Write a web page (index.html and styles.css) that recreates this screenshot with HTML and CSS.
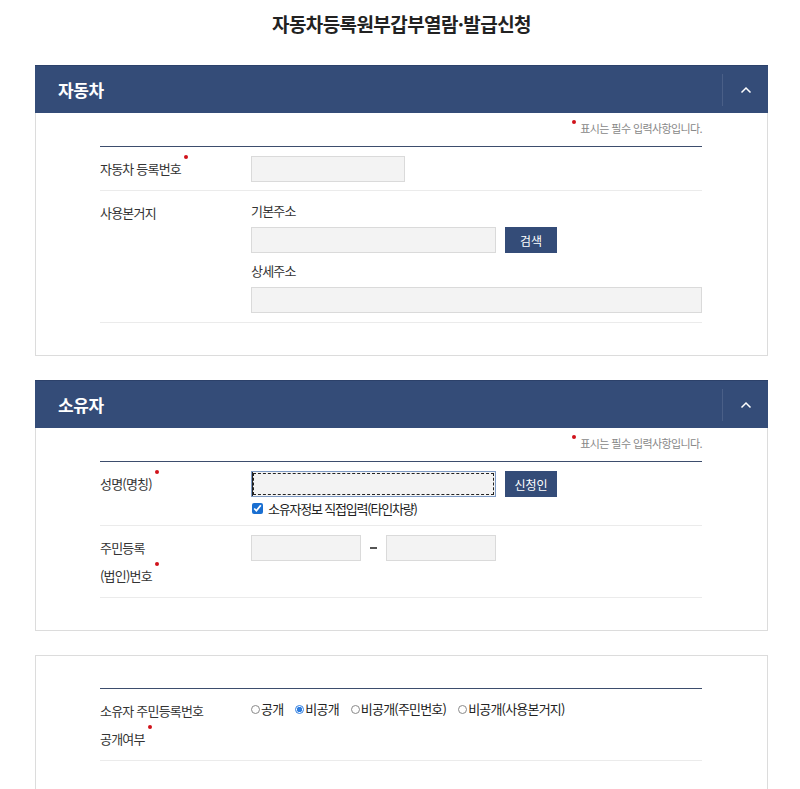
FILE: index.html
```html
<!DOCTYPE html>
<html lang="ko">
<head>
    <meta charset="UTF-8">
    <meta name="viewport" content="width=device-width, initial-scale=1.0">
    <title>자동차등록원부갑부열람·발급신청</title>
    <link rel="stylesheet" href="styles.css">
</head>
<body>

    <div class="page">
        <h1 class="page-title">자동차등록원부갑부열람·발급신청</h1>

        <!-- 자동차 -->
        <section class="panel">
            <div class="panel-head">
                <h2>자동차</h2>
                <button class="toggle" type="button" aria-label="접기">
                    <svg width="12" height="8" viewBox="0 0 12 8"><polyline points="1.5,6.5 6,2 10.5,6.5" fill="none" stroke="#fff" stroke-width="1.5"/></svg>
                </button>
            </div>
            <div class="panel-body">
                <p class="req-note"><span class="dot"></span>표시는 필수 입력사항입니다.</p>
                <div class="form">
                    <div class="row">
                        <div class="label">자동차 등록번호<span class="dot"></span></div>
                        <div class="field">
                            <input class="input w-154" type="text">
                        </div>
                    </div>
                    <div class="row">
                        <div class="label">사용본거지</div>
                        <div class="field">
                            <div class="sub-label">기본주소</div>
                            <div class="line">
                                <input class="input w-245" type="text">
                                <button class="btn" type="button">검색</button>
                            </div>
                            <div class="sub-label">상세주소</div>
                            <input class="input w-full" type="text">
                        </div>
                    </div>
                </div>
            </div>
        </section>

        <!-- 소유자 -->
        <section class="panel">
            <div class="panel-head">
                <h2>소유자</h2>
                <button class="toggle" type="button" aria-label="접기">
                    <svg width="12" height="8" viewBox="0 0 12 8"><polyline points="1.5,6.5 6,2 10.5,6.5" fill="none" stroke="#fff" stroke-width="1.5"/></svg>
                </button>
            </div>
            <div class="panel-body">
                <p class="req-note"><span class="dot"></span>표시는 필수 입력사항입니다.</p>
                <div class="form">
                    <div class="row">
                        <div class="label">성명(명칭)<span class="dot"></span></div>
                        <div class="field">
                            <div class="line">
                                <input class="input w-245 focused" type="text">
                                <button class="btn" type="button">신청인</button>
                            </div>
                            <label class="check"><input type="checkbox" checked> 소유자정보 직접입력(타인차량)</label>
                        </div>
                    </div>
                    <div class="row">
                        <div class="label">주민등록<br>(법인)번호<span class="dot"></span></div>
                        <div class="field">
                            <div class="line">
                                <input class="input w-110" type="text">
                                <span class="dash"></span>
                                <input class="input w-110" type="text">
                            </div>
                        </div>
                    </div>
                </div>
            </div>
        </section>

        <!-- 공개여부 -->
        <section class="panel">
            <div class="panel-body plain">
                <div class="form">
                    <div class="row">
                        <div class="label">소유자 주민등록번호<br>공개여부<span class="dot"></span></div>
                        <div class="field">
                            <div class="radios">
                                <label><input type="radio" name="open">공개</label>
                                <label><input type="radio" name="open" checked>비공개</label>
                                <label><input type="radio" name="open">비공개(주민번호)</label>
                                <label><input type="radio" name="open">비공개(사용본거지)</label>
                            </div>
                        </div>
                    </div>
                </div>
            </div>
        </section>
    </div>

</body>
</html>
```

FILE: styles.css
```css
/* General Styling */
body {
    font-family: "Noto Sans CJK KR", "Noto Sans", sans-serif;
    margin: 0;
    padding: 0;
    background: #fff;
    color: #333;
    font-size: 13px;
    letter-spacing: -0.8px;
}

.page {
    padding: 10px 32px 0 35px;
}

.page-title {
    margin: 0 0 27px;
    text-align: center;
    font-size: 19px;
    font-weight: 700;
    line-height: 28px;
    letter-spacing: -0.6px;
    color: #222;
}

/* Panels */
.panel {
    border: 1px solid #dcdcdc;
    margin-bottom: 24px;
}

.panel-head {
    display: flex;
    align-items: center;
    height: 47px;
    background: #344c78;
    border-top: 1px solid #2c416a;
    margin: -1px -1px 0;
}

.panel-head h2 {
    flex: 1;
    margin: 0;
    padding-left: 23px;
    color: #fff;
    font-size: 17px;
    font-weight: 700;
    letter-spacing: -0.4px;
}

.toggle {
    width: 46px;
    height: 32px;
    padding: 0;
    border: none;
    border-left: 1px solid #4a5f87;
    background: none;
    display: flex;
    align-items: center;
    justify-content: center;
    cursor: pointer;
}

.panel-body {
    padding: 5px 65px 32px 64px;
}

.panel-body.plain {
    padding-top: 32px;
}

.req-note {
    margin: 0 0 8px;
    text-align: right;
    font-size: 11px;
    line-height: 20px;
    color: #888;
    letter-spacing: -0.6px;
}

.req-note .dot {
    margin: 2px 4px 0 0;
}

.dot {
    display: inline-block;
    width: 4px;
    height: 4px;
    border-radius: 50%;
    background: #d0121b;
    vertical-align: top;
    margin: 0 0 0 3px;
}

/* Form rows */
.form {
    border-top: 1px solid #3d4d6d;
}

.row {
    display: flex;
    padding: 8px 0 7px;
    border-bottom: 1px solid #ebebeb;
}

.label {
    width: 151px;
    flex-shrink: 0;
    line-height: 28px;
    color: #333;
}

.field {
    flex: 1;
}

.sub-label {
    line-height: 24px;
    margin-bottom: 4px;
    color: #333;
}

.line {
    display: flex;
    align-items: center;
    margin-top: 1px;
}

.sub-label + .line {
    margin-top: 0;
}

.line + .sub-label {
    margin-top: 6px;
}

.input {
    box-sizing: border-box;
    height: 26px;
    border: 1px solid #dadada;
    background: #f3f3f3;
    padding: 0 6px;
    font-family: inherit;
    font-size: 13px;
    margin: 0;
}

.w-154 { width: 154px; margin-top: 1px; }
.w-245 { width: 245px; }
.w-110 { width: 110px; }
.w-full { width: 100%; display: block; margin-bottom: 2px; }

.input.focused {
    border-color: #7d9ac4;
    outline: 1px dashed #222;
    outline-offset: -3px;
    box-shadow: inset 2px 0 0 -1px #222;
}

.btn {
    width: 52px;
    height: 26px;
    margin-left: 9px;
    padding: 0;
    border: none;
    background: #344c78;
    color: #fff;
    font-family: inherit;
    font-size: 12px;
    letter-spacing: 0;
    cursor: pointer;
}

.dash {
    width: 25px;
    display: flex;
    justify-content: center;
}

.dash::before {
    content: "";
    width: 7px;
    height: 2px;
    background: #555;
}

.check {
    display: flex;
    align-items: center;
    height: 20px;
    margin-top: 1px;
    color: #222;
    letter-spacing: -1.2px;
}

.check input {
    width: 11px;
    height: 11px;
    margin: 0 5px 0 1px;
    accent-color: #1a6fd1;
}

/* Radios */
.radios {
    display: flex;
    gap: 12px;
    line-height: 28px;
    margin-top: -2px;
    color: #222;
}

.radios label {
    display: flex;
    align-items: center;
}

.radios input {
    appearance: none;
    width: 9px;
    height: 9px;
    margin: 1px 1px 0 0;
    border: 1px solid #8a8a8a;
    border-radius: 50%;
    background: #fff;
}

.radios input:checked {
    border-color: #2f7ee0;
    background: radial-gradient(circle, #2f7ee0 0 2.5px, #fff 3px);
}
```
